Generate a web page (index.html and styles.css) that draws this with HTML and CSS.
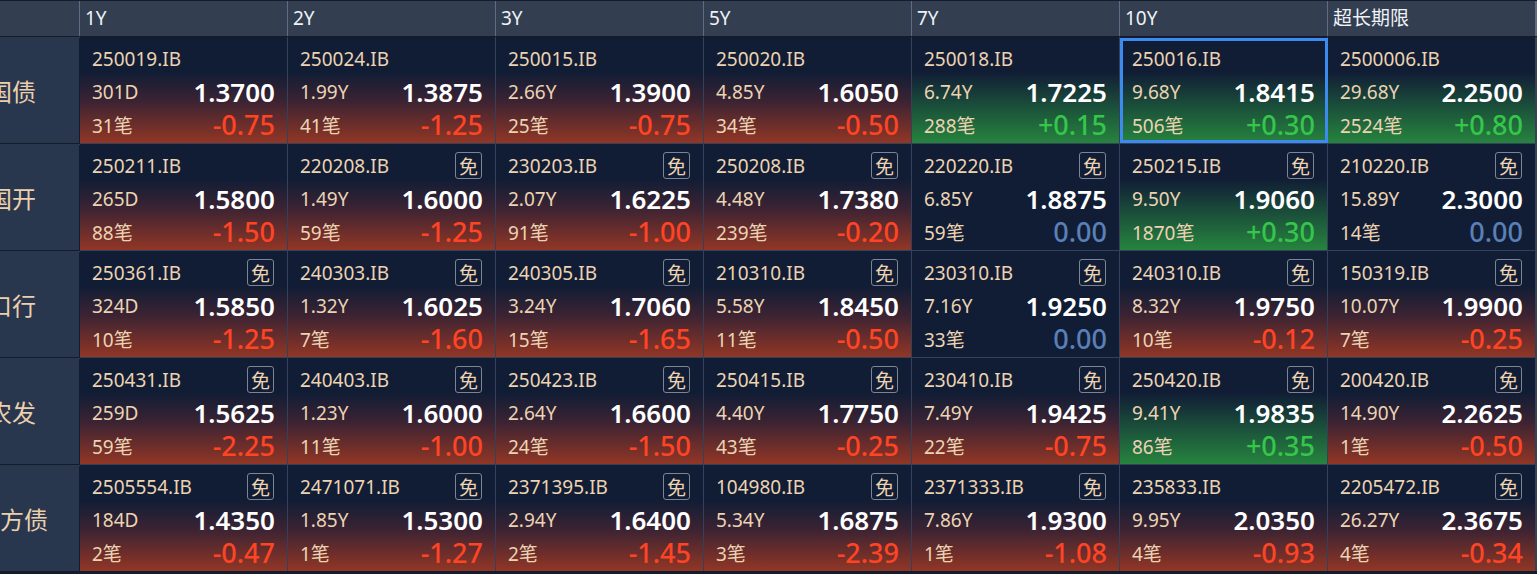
FILE: index.html
```html
<!DOCTYPE html>
<html lang="zh-CN">
<head>
<meta charset="utf-8">
<title>利率债行情</title>
<link rel="stylesheet" href="styles.css">
</head>
<body>
<div class="board">
  <div class="head">
    <div class="hcell corner"></div>
    <div class="hcell">1Y</div>
    <div class="hcell">2Y</div>
    <div class="hcell">3Y</div>
    <div class="hcell">5Y</div>
    <div class="hcell">7Y</div>
    <div class="hcell">10Y</div>
    <div class="hcell">超长期限</div>
  </div>
  <div class="grid">
    <div class="label">国债</div>
    <div class="cell down"><div class="l1"><span class="code">250019.IB</span></div><div class="l2"><span class="sub">301D</span><span class="price">1.3700</span></div><div class="l3"><span class="sub">31笔</span><span class="chg">-0.75</span></div></div>
    <div class="cell down"><div class="l1"><span class="code">250024.IB</span></div><div class="l2"><span class="sub">1.99Y</span><span class="price">1.3875</span></div><div class="l3"><span class="sub">41笔</span><span class="chg">-1.25</span></div></div>
    <div class="cell down"><div class="l1"><span class="code">250015.IB</span></div><div class="l2"><span class="sub">2.66Y</span><span class="price">1.3900</span></div><div class="l3"><span class="sub">25笔</span><span class="chg">-0.75</span></div></div>
    <div class="cell down"><div class="l1"><span class="code">250020.IB</span></div><div class="l2"><span class="sub">4.85Y</span><span class="price">1.6050</span></div><div class="l3"><span class="sub">34笔</span><span class="chg">-0.50</span></div></div>
    <div class="cell up"><div class="l1"><span class="code">250018.IB</span></div><div class="l2"><span class="sub">6.74Y</span><span class="price">1.7225</span></div><div class="l3"><span class="sub">288笔</span><span class="chg">+0.15</span></div></div>
    <div class="cell up selected"><div class="l1"><span class="code">250016.IB</span></div><div class="l2"><span class="sub">9.68Y</span><span class="price">1.8415</span></div><div class="l3"><span class="sub">506笔</span><span class="chg">+0.30</span></div></div>
    <div class="cell up"><div class="l1"><span class="code">2500006.IB</span></div><div class="l2"><span class="sub">29.68Y</span><span class="price">2.2500</span></div><div class="l3"><span class="sub">2524笔</span><span class="chg">+0.80</span></div></div>

    <div class="label">国开</div>
    <div class="cell down"><div class="l1"><span class="code">250211.IB</span></div><div class="l2"><span class="sub">265D</span><span class="price">1.5800</span></div><div class="l3"><span class="sub">88笔</span><span class="chg">-1.50</span></div></div>
    <div class="cell down"><div class="l1"><span class="code">220208.IB</span><span class="tag">免</span></div><div class="l2"><span class="sub">1.49Y</span><span class="price">1.6000</span></div><div class="l3"><span class="sub">59笔</span><span class="chg">-1.25</span></div></div>
    <div class="cell down"><div class="l1"><span class="code">230203.IB</span><span class="tag">免</span></div><div class="l2"><span class="sub">2.07Y</span><span class="price">1.6225</span></div><div class="l3"><span class="sub">91笔</span><span class="chg">-1.00</span></div></div>
    <div class="cell down"><div class="l1"><span class="code">250208.IB</span><span class="tag">免</span></div><div class="l2"><span class="sub">4.48Y</span><span class="price">1.7380</span></div><div class="l3"><span class="sub">239笔</span><span class="chg">-0.20</span></div></div>
    <div class="cell flat"><div class="l1"><span class="code">220220.IB</span><span class="tag">免</span></div><div class="l2"><span class="sub">6.85Y</span><span class="price">1.8875</span></div><div class="l3"><span class="sub">59笔</span><span class="chg">0.00</span></div></div>
    <div class="cell up"><div class="l1"><span class="code">250215.IB</span><span class="tag">免</span></div><div class="l2"><span class="sub">9.50Y</span><span class="price">1.9060</span></div><div class="l3"><span class="sub">1870笔</span><span class="chg">+0.30</span></div></div>
    <div class="cell flat"><div class="l1"><span class="code">210220.IB</span><span class="tag">免</span></div><div class="l2"><span class="sub">15.89Y</span><span class="price">2.3000</span></div><div class="l3"><span class="sub">14笔</span><span class="chg">0.00</span></div></div>

    <div class="label">口行</div>
    <div class="cell down"><div class="l1"><span class="code">250361.IB</span><span class="tag">免</span></div><div class="l2"><span class="sub">324D</span><span class="price">1.5850</span></div><div class="l3"><span class="sub">10笔</span><span class="chg">-1.25</span></div></div>
    <div class="cell down"><div class="l1"><span class="code">240303.IB</span><span class="tag">免</span></div><div class="l2"><span class="sub">1.32Y</span><span class="price">1.6025</span></div><div class="l3"><span class="sub">7笔</span><span class="chg">-1.60</span></div></div>
    <div class="cell down"><div class="l1"><span class="code">240305.IB</span><span class="tag">免</span></div><div class="l2"><span class="sub">3.24Y</span><span class="price">1.7060</span></div><div class="l3"><span class="sub">15笔</span><span class="chg">-1.65</span></div></div>
    <div class="cell down"><div class="l1"><span class="code">210310.IB</span><span class="tag">免</span></div><div class="l2"><span class="sub">5.58Y</span><span class="price">1.8450</span></div><div class="l3"><span class="sub">11笔</span><span class="chg">-0.50</span></div></div>
    <div class="cell flat"><div class="l1"><span class="code">230310.IB</span><span class="tag">免</span></div><div class="l2"><span class="sub">7.16Y</span><span class="price">1.9250</span></div><div class="l3"><span class="sub">33笔</span><span class="chg">0.00</span></div></div>
    <div class="cell down"><div class="l1"><span class="code">240310.IB</span><span class="tag">免</span></div><div class="l2"><span class="sub">8.32Y</span><span class="price">1.9750</span></div><div class="l3"><span class="sub">10笔</span><span class="chg">-0.12</span></div></div>
    <div class="cell down"><div class="l1"><span class="code">150319.IB</span><span class="tag">免</span></div><div class="l2"><span class="sub">10.07Y</span><span class="price">1.9900</span></div><div class="l3"><span class="sub">7笔</span><span class="chg">-0.25</span></div></div>

    <div class="label">农发</div>
    <div class="cell down"><div class="l1"><span class="code">250431.IB</span><span class="tag">免</span></div><div class="l2"><span class="sub">259D</span><span class="price">1.5625</span></div><div class="l3"><span class="sub">59笔</span><span class="chg">-2.25</span></div></div>
    <div class="cell down"><div class="l1"><span class="code">240403.IB</span><span class="tag">免</span></div><div class="l2"><span class="sub">1.23Y</span><span class="price">1.6000</span></div><div class="l3"><span class="sub">11笔</span><span class="chg">-1.00</span></div></div>
    <div class="cell down"><div class="l1"><span class="code">250423.IB</span><span class="tag">免</span></div><div class="l2"><span class="sub">2.64Y</span><span class="price">1.6600</span></div><div class="l3"><span class="sub">24笔</span><span class="chg">-1.50</span></div></div>
    <div class="cell down"><div class="l1"><span class="code">250415.IB</span><span class="tag">免</span></div><div class="l2"><span class="sub">4.40Y</span><span class="price">1.7750</span></div><div class="l3"><span class="sub">43笔</span><span class="chg">-0.25</span></div></div>
    <div class="cell down"><div class="l1"><span class="code">230410.IB</span><span class="tag">免</span></div><div class="l2"><span class="sub">7.49Y</span><span class="price">1.9425</span></div><div class="l3"><span class="sub">22笔</span><span class="chg">-0.75</span></div></div>
    <div class="cell up"><div class="l1"><span class="code">250420.IB</span><span class="tag">免</span></div><div class="l2"><span class="sub">9.41Y</span><span class="price">1.9835</span></div><div class="l3"><span class="sub">86笔</span><span class="chg">+0.35</span></div></div>
    <div class="cell down"><div class="l1"><span class="code">200420.IB</span><span class="tag">免</span></div><div class="l2"><span class="sub">14.90Y</span><span class="price">2.2625</span></div><div class="l3"><span class="sub">1笔</span><span class="chg">-0.50</span></div></div>

    <div class="label">地方债</div>
    <div class="cell down"><div class="l1"><span class="code">2505554.IB</span><span class="tag">免</span></div><div class="l2"><span class="sub">184D</span><span class="price">1.4350</span></div><div class="l3"><span class="sub">2笔</span><span class="chg">-0.47</span></div></div>
    <div class="cell down"><div class="l1"><span class="code">2471071.IB</span><span class="tag">免</span></div><div class="l2"><span class="sub">1.85Y</span><span class="price">1.5300</span></div><div class="l3"><span class="sub">1笔</span><span class="chg">-1.27</span></div></div>
    <div class="cell down"><div class="l1"><span class="code">2371395.IB</span><span class="tag">免</span></div><div class="l2"><span class="sub">2.94Y</span><span class="price">1.6400</span></div><div class="l3"><span class="sub">2笔</span><span class="chg">-1.45</span></div></div>
    <div class="cell down"><div class="l1"><span class="code">104980.IB</span><span class="tag">免</span></div><div class="l2"><span class="sub">5.34Y</span><span class="price">1.6875</span></div><div class="l3"><span class="sub">3笔</span><span class="chg">-2.39</span></div></div>
    <div class="cell down"><div class="l1"><span class="code">2371333.IB</span><span class="tag">免</span></div><div class="l2"><span class="sub">7.86Y</span><span class="price">1.9300</span></div><div class="l3"><span class="sub">1笔</span><span class="chg">-1.08</span></div></div>
    <div class="cell down"><div class="l1"><span class="code">235833.IB</span></div><div class="l2"><span class="sub">9.95Y</span><span class="price">2.0350</span></div><div class="l3"><span class="sub">4笔</span><span class="chg">-0.93</span></div></div>
    <div class="cell down"><div class="l1"><span class="code">2205472.IB</span><span class="tag">免</span></div><div class="l2"><span class="sub">26.27Y</span><span class="price">2.3675</span></div><div class="l3"><span class="sub">4笔</span><span class="chg">-0.34</span></div></div>
  </div>
</div>
</body>
</html>
```

FILE: styles.css
```css
html, body {
  margin: 0;
  padding: 0;
  background: #141c2b;
  overflow: hidden;
}

body {
  font-family: "Noto Sans", "Noto Sans CJK SC", sans-serif;
  color: #ecd3b2;
}

.board {
  margin-left: -55px;
  padding-top: 1px;
  width: 1600px;
}

.head {
  display: grid;
  grid-template-columns: 134px repeat(7, 207px);
  column-gap: 1px;
  background: #5c6c87;
  height: 35px;
  border-bottom: 1px solid #141c2b;
}

.hcell {
  background: #333e51;
  color: #eef2f7;
  font-size: 19px;
  line-height: 35px;
  padding-left: 5px;
}

.grid {
  display: grid;
  grid-template-columns: 134px repeat(7, 207px);
  grid-auto-rows: 106px;
  gap: 1px;
  background: #33415a;
}

.label {
  background: #29374e;
  display: flex;
  align-items: center;
  justify-content: center;
  font-size: 24px;
  color: #ecd0ad;
  box-shadow: 1px 1px 0 #141c2b;
  position: relative;
  z-index: 1;
}

.cell {
  background: #111d35;
  padding: 5px 12px 0 12px;
  display: flex;
  flex-direction: column;
  position: relative;
}

.cell.down {
  background: linear-gradient(to bottom, #111d35 0%, #111d35 33%, #3a2333 60%, #923625 100%);
}

.cell.up {
  background: linear-gradient(to bottom, #111d35 0%, #111d35 33%, #1a4a3a 62%, #26843e 100%);
}

.cell.selected::after {
  content: "";
  position: absolute;
  left: 0;
  top: 1px;
  right: -1px;
  bottom: 0;
  border: 3px solid #3d8bf0;
  pointer-events: none;
}

.l1, .l2, .l3 {
  height: 33px;
  display: flex;
  align-items: center;
  justify-content: space-between;
}

.code, .sub {
  font-size: 19px;
  color: #ecd3b2;
}

.tag {
  width: 25px;
  height: 25px;
  border: 1px solid #7d8594;
  border-radius: 3px;
  display: flex;
  align-items: center;
  justify-content: center;
  font-size: 19px;
  color: #ecd3b2;
  margin-right: 1px;
  font-family: "Noto Sans CJK SC", sans-serif;
}

.price {
  font-size: 26px;
  font-weight: 600;
  color: #ffffff;
}

.chg {
  font-size: 27px;
  font-weight: 500;
  color: #ff4424;
}

.up .chg {
  color: #35c64b;
}

.flat .chg {
  color: #5a80b8;
}
```
